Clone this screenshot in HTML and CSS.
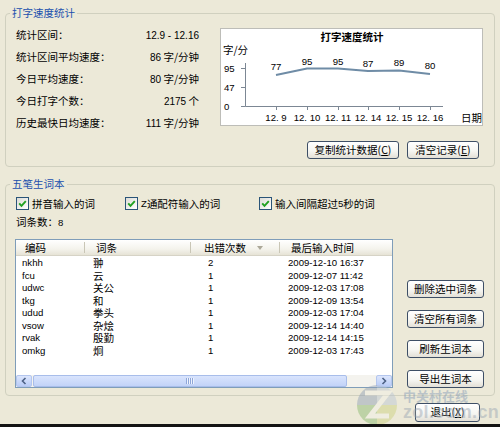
FILE: index.html
```html
<!DOCTYPE html>
<html>
<head>
<meta charset="utf-8">
<link rel="stylesheet" href="styles.css">
</head>
<body>
<div class="window">
  <section class="group g1">
    <div class="group-title">打字速度统计</div>
    <div class="g1-body">
      <div class="stats">
        <div class="stat"><span class="lbl">统计区间：</span><span class="val"><span class="lat">12.9 - 12.16</span></span></div>
        <div class="stat"><span class="lbl">统计区间平均速度：</span><span class="val"><span class="lat">86</span> 字/分钟</span></div>
        <div class="stat"><span class="lbl">今日平均速度：</span><span class="val"><span class="lat">80</span> 字/分钟</span></div>
        <div class="stat"><span class="lbl">今日打字个数：</span><span class="val"><span class="lat">2175</span> 个</span></div>
        <div class="stat"><span class="lbl">历史最快日均速度：</span><span class="val"><span class="lat">111</span> 字/分钟</span></div>
      </div>
      <div class="chart">
        <svg width="261" height="96" viewBox="1 1 261 96">
          <text x="132" y="13" text-anchor="middle" class="ct-title">打字速度统计</text>
          <text x="3" y="26" class="ct-unit">字/分</text>
          <text x="4" y="44" class="ct-num">95</text>
          <text x="4" y="63" class="ct-num">47</text>
          <text x="4" y="81.5" class="ct-num">0</text>
          <path class="axis" d="M25.5 35V78.5H223 M21 40.5H25.5 M21 59.5H25.5 M21 78.5H25.5 M56.5 78.5V82 M87.5 78.5V82 M118.5 78.5V82 M148.5 78.5V82 M179.5 78.5V82 M210.5 78.5V82"/>
          <polyline class="series" points="56,47 87,40.5 118,40.5 148,43 179,42.5 210,46"/>
          <text x="56" y="42" text-anchor="middle" class="ct-num">77</text>
          <text x="87" y="36.5" text-anchor="middle" class="ct-num">95</text>
          <text x="118" y="36.5" text-anchor="middle" class="ct-num">95</text>
          <text x="148" y="39" text-anchor="middle" class="ct-num">87</text>
          <text x="179" y="38" text-anchor="middle" class="ct-num">89</text>
          <text x="210" y="41" text-anchor="middle" class="ct-num">80</text>
          <text x="56" y="93" text-anchor="middle" class="ct-num">12. 9</text>
          <text x="87" y="93" text-anchor="middle" class="ct-num">12. 10</text>
          <text x="118" y="93" text-anchor="middle" class="ct-num">12. 11</text>
          <text x="148" y="93" text-anchor="middle" class="ct-num">12. 14</text>
          <text x="179" y="93" text-anchor="middle" class="ct-num">12. 15</text>
          <text x="210" y="93" text-anchor="middle" class="ct-num">12. 16</text>
          <text x="241" y="93.5" class="ct-unit">日期</text>
        </svg>
      </div>
    </div>
    <div class="btn-row">
      <button class="btn b-copy">复制统计数据(<u>C</u>)</button>
      <button class="btn b-clear">清空记录(<u>E</u>)</button>
    </div>
  </section>

  <section class="group g2">
    <div class="group-title">五笔生词本</div>
    <div class="checks">
      <label class="chk c1"><span class="box"><svg width="11" height="11" viewBox="0 0 11 11"><polyline points="2.2,5.3 4.5,7.8 8.8,3.2"/></svg></span>拼音输入的词</label>
      <label class="chk c2"><span class="box"><svg width="11" height="11" viewBox="0 0 11 11"><polyline points="2.2,5.3 4.5,7.8 8.8,3.2"/></svg></span><span class="lat">Z</span>通配符输入的词</label>
      <label class="chk c3"><span class="box"><svg width="11" height="11" viewBox="0 0 11 11"><polyline points="2.2,5.3 4.5,7.8 8.8,3.2"/></svg></span>输入间隔超过<span class="lat">5</span>秒的词</label>
    </div>
    <div class="count">词条数：<span class="lat">8</span></div>
    <div class="g2-body">
      <div class="listview">
        <div class="lv-head">
          <div class="hc h-code">编码</div>
          <div class="hc h-word">词条</div>
          <div class="hc h-cnt">出错次数<span class="sort"></span></div>
          <div class="hc h-time">最后输入时间</div>
        </div>
        <div class="lv-rows">
          <div class="row"><span class="c-code lat">nkhh</span><span class="c-word">翀</span><span class="c-cnt lat">2</span><span class="c-time lat">2009-12-10 16:37</span></div>
          <div class="row"><span class="c-code lat">fcu</span><span class="c-word">云</span><span class="c-cnt lat">1</span><span class="c-time lat">2009-12-07 11:42</span></div>
          <div class="row"><span class="c-code lat">udwc</span><span class="c-word">关公</span><span class="c-cnt lat">1</span><span class="c-time lat">2009-12-03 17:08</span></div>
          <div class="row"><span class="c-code lat">tkg</span><span class="c-word">和</span><span class="c-cnt lat">1</span><span class="c-time lat">2009-12-09 13:54</span></div>
          <div class="row"><span class="c-code lat">udud</span><span class="c-word">拳头</span><span class="c-cnt lat">1</span><span class="c-time lat">2009-12-03 17:04</span></div>
          <div class="row"><span class="c-code lat">vsow</span><span class="c-word">杂烩</span><span class="c-cnt lat">1</span><span class="c-time lat">2009-12-14 14:40</span></div>
          <div class="row"><span class="c-code lat">rvak</span><span class="c-word">殷勤</span><span class="c-cnt lat">1</span><span class="c-time lat">2009-12-14 14:15</span></div>
          <div class="row"><span class="c-code lat">omkg</span><span class="c-word">炯</span><span class="c-cnt lat">1</span><span class="c-time lat">2009-12-03 17:43</span></div>
        </div>
        <div class="hscroll">
          <span class="sb-btn"><svg width="14" height="10" viewBox="0 0 14 10"><polyline points="8.5,2 5.5,5 8.5,8"/></svg></span>
          <span class="sb-thumb"><span class="grip"></span></span>
          <span class="sb-track"></span>
          <span class="sb-btn"><svg width="14" height="10" viewBox="0 0 14 10"><polyline points="5.5,2 8.5,5 5.5,8"/></svg></span>
        </div>
      </div>
      <div class="side-btns">
        <button class="btn b-side">删除选中词条</button>
        <button class="btn b-side">清空所有词条</button>
        <button class="btn b-side">刷新生词本</button>
        <button class="btn b-side">导出生词本</button>
      </div>
    </div>
  </section>

  <div class="exit-row">
    <button class="btn b-exit">退出(<u>X</u>)</button>
  </div>

  <div class="watermark">
    <svg class="wm-logo" width="44" height="44" viewBox="0 0 44 44">
      <path d="M22 22L22 2A20 20 0 0 0 2 22Z" fill="#8d9db5"/>
      <path d="M22 22L2 22A20 20 0 0 0 22 42Z" fill="#86b76a"/>
      <path d="M22 22L22 42A20 20 0 0 0 42 22Z" fill="#c9cf7a"/>
      <path d="M22 22L42 22A20 20 0 0 0 22 2Z" fill="#b8c4d4"/>
      <path d="M10 10H33L15 33H34" fill="none" stroke="#f4f2ea" stroke-width="5"/>
    </svg>
    <div class="wm-text">
      <span class="wm-cn">中关村在线</span>
      <span class="wm-en">zol.com.cn</span>
    </div>
  </div>
</div>
</body>
</html>
```

FILE: styles.css
```css
* { box-sizing: border-box; }
html, body { margin: 0; padding: 0; }
body {
  width: 500px;
  height: 427px;
  overflow: hidden;
  background: #ECE9D8;
  font-family: "Noto Sans CJK SC", "Liberation Sans", sans-serif;
  font-size: 10.5px;
  color: #000;
}
.lat {
  font-family: "Liberation Sans", "Noto Sans CJK SC", sans-serif;
  font-size: 9.6px;
}
.stat .lat { font-size: 10px; }
.window {
  position: relative;
  height: 427px;
  padding-top: 13px;
  border-bottom: 3px solid #141414;
  overflow: hidden;
  display: flex;
  flex-direction: column;
}
.group {
  margin-left: 5px;
  width: 490px;
  border: 1px solid #D0D0BF;
  border-radius: 4px;
}
.group-title {
  width: fit-content;
  margin: -8px 0 0 4px;
  padding: 0 2px;
  height: 14px;
  line-height: 14px;
  background: #ECE9D8;
  color: #2150AE;
}
/* group 1 */
.g1-body {
  display: flex;
  margin-top: 3px;
  padding-left: 10px;
}
.stats { width: 183px; }
.stat {
  height: 22px;
  display: flex;
  align-items: center;
  justify-content: space-between;
  white-space: nowrap;
}
.chart {
  margin: 5px 0 0 21px;
  width: 263px;
  height: 98px;
  background: #fff;
  border: 1px solid #BDBDB8;
}
.chart svg { display: block; }
.ct-title { font-family: "Noto Sans CJK SC", sans-serif; font-size: 10.5px; font-weight: 700; fill: #000; }
.ct-unit { font-family: "Noto Sans CJK SC", sans-serif; font-size: 10.5px; fill: #000; }
.ct-num { font-family: "Liberation Sans", sans-serif; font-size: 9.6px; fill: #000; }
.axis { fill: none; stroke: #7c8794; stroke-width: 1; }
.series { fill: none; stroke: #6F8CA6; stroke-width: 2; stroke-linejoin: round; }
.btn-row {
  display: flex;
  justify-content: flex-end;
  gap: 8px;
  margin-top: 8px;
  padding-right: 15px;
  padding-bottom: 7px;
}
.btn {
  height: 18px;
  padding: 0;
  border: 1px solid #3E4F66;
  border-radius: 3px;
  background: linear-gradient(#FFFFFF, #F6F6F2 55%, #E3E0D7);
  font-family: "Noto Sans CJK SC", sans-serif;
  font-size: 10.5px;
  color: #000;
  display: flex;
  align-items: center;
  justify-content: center;
  line-height: 1;
}
.btn u { text-underline-offset: 1px; }
.b-copy { width: 92px; }
.b-clear { width: 72px; }
/* group 2 */
.g2 { margin-top: 17px; }
.checks {
  display: flex;
  align-items: center;
  height: 16px;
  margin-top: 4px;
  padding-left: 10px;
}
.chk {
  display: flex;
  align-items: center;
  white-space: nowrap;
}
.c1 { width: 109px; }
.c2 { width: 134px; }
.box {
  width: 13px;
  height: 13px;
  margin-right: 3px;
  border: 1px solid #2A5478;
  background: linear-gradient(135deg, #DCDCD6, #FFFFFF);
  display: flex;
}
.box polyline { fill: none; stroke: #21A121; stroke-width: 1.9; }
.count {
  margin-top: 4px;
  padding-left: 10px;
  height: 14px;
  line-height: 14px;
}
.g2-body {
  display: flex;
  margin-top: 10px;
  padding-left: 9px;
  padding-bottom: 7px;
}
.listview {
  width: 378px;
  height: 149px;
  border: 1px solid #7F9DB9;
  background: #fff;
  display: flex;
  flex-direction: column;
}
.lv-head {
  display: flex;
  height: 16px;
  background: linear-gradient(#FFFFFF, #F4F3EC 60%, #E6E3D6);
  border-bottom: 1px solid #D6D3C6;
}
.hc {
  display: flex;
  align-items: center;
  padding-left: 9px;
  background: linear-gradient(#C9C6B6, #C9C6B6) right 2px center / 1px 11px no-repeat;
}
.h-code { width: 71px; }
.h-word { width: 106px; }
.h-cnt { width: 89px; padding-left: 11px; }
.h-time { flex: 1; background: none; }
.sort {
  width: 0;
  height: 0;
  margin-left: 11px;
  border-left: 3.5px solid transparent;
  border-right: 3.5px solid transparent;
  border-top: 4px solid #ACA899;
}
.lv-rows { padding-top: 1px; }
.row {
  display: flex;
  height: 12.5px;
  line-height: 12.5px;
  white-space: nowrap;
}
.c-code { width: 71px; padding-left: 6px; }
.c-word { width: 106px; padding-left: 6px; }
.c-cnt { width: 89px; padding-left: 15px; }
.c-time { flex: 1; padding-left: 6px; }
.hscroll {
  margin-top: auto;
  height: 12px;
  display: flex;
  background: #F4F3EE;
}
.sb-btn {
  width: 16px;
  height: 12px;
  border: 1px solid #B4C6EE;
  border-radius: 2px;
  background: linear-gradient(#DCE6FD, #B9CCF6);
  display: flex;
  align-items: center;
  justify-content: center;
}
.sb-btn polyline { fill: none; stroke: #4D6185; stroke-width: 1.6; }
.sb-thumb {
  width: 314px;
  margin-left: 1px;
  border: 1px solid #A8BDEA;
  border-radius: 2px;
  background: linear-gradient(#D9E4FD, #C2D3F8);
  display: flex;
  align-items: center;
  justify-content: center;
}
.grip {
  width: 8px;
  height: 6px;
  background: repeating-linear-gradient(90deg, #8EA6D8 0 1px, #EEF3FE 1px 2px);
}
.sb-track { flex: 1; }
.side-btns {
  display: flex;
  flex-direction: column;
  gap: 12px;
  margin: 41px 0 0 14px;
  width: 77px;
}
.b-side { width: 77px; }
.exit-row {
  display: flex;
  justify-content: flex-end;
  margin-top: 7px;
  padding-right: 20px;
}
.b-exit { width: 65px; height: 19px; }
/* watermark overlay */
.watermark {
  position: absolute;
  left: 355px;
  top: 383px;
  display: flex;
  opacity: 0.45;
  pointer-events: none;
}
.wm-logo { display: block; }
.wm-text {
  display: flex;
  flex-direction: column;
  margin-left: 4px;
}
.wm-cn {
  margin-top: 6px;
  font-family: "Noto Sans CJK SC", sans-serif;
  font-size: 13px;
  font-weight: 700;
  line-height: 13px;
  color: #7F97B5;
}
.wm-en {
  font-family: "Liberation Sans", sans-serif;
  font-size: 18px;
  font-weight: 700;
  line-height: 20px;
  letter-spacing: 0.3px;
  color: #98A4B2;
}
```
